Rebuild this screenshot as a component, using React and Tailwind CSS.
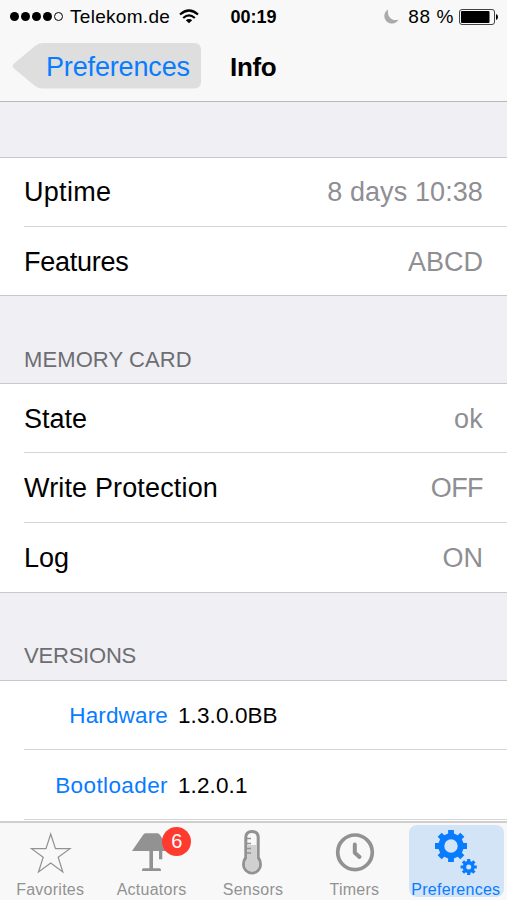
import React from 'react';

const sections = [
    {
        title: '',
        rows: [
            { label: 'Uptime', value: '8 days 10:38', height: 'h-[69px]', labelStyle: 'tracking-[0.3px]', valueStyle: 'tracking-[0.1px]' },
            { label: 'Features', value: 'ABCD', height: 'h-[68px] pt-[2px]', labelStyle: 'tracking-[-0.25px]', valueStyle: '' },
        ],
    },
    {
        title: 'MEMORY CARD',
        rows: [
            { label: 'State', value: 'ok', height: 'h-[69px] pt-[2px]', labelStyle: '', valueStyle: 'tracking-[0.3px]' },
            { label: 'Write Protection', value: 'OFF', height: 'h-[70px] pt-[2px]', labelStyle: 'tracking-[0.15px]', valueStyle: 'tracking-[-0.6px]' },
            { label: 'Log', value: 'ON', height: 'h-[69px] pt-[2px]', labelStyle: '', valueStyle: '' },
        ],
    },
];

const versions = [
    { label: 'Hardware', value: '1.3.0.0BB', height: 'h-[69px] pt-[2px]', labelStyle: 'tracking-[0.15px]' },
    { label: 'Bootloader', value: '1.2.0.1', height: 'h-[70px] pt-[2px]', labelStyle: 'tracking-[0.4px]' },
];

const gearPath = (cx, cy, outer, root, hole, tooth) => {
    let teeth = '';
    for (let i = 0; i < 8; i++) {
        const a = (i * Math.PI) / 4;
        const point = (x, y) =>
            `${(cx + x * Math.cos(a) - y * Math.sin(a)).toFixed(2)} ${(cy + x * Math.sin(a) + y * Math.cos(a)).toFixed(2)}`;
        const edge = Math.sqrt(root * root - tooth * tooth);
        teeth += `${i === 0 ? 'M' : 'L'}${point(edge, -tooth)}L${point(outer, -tooth)}L${point(outer, tooth)}L${point(edge, tooth)}`;
    }
    return `${teeth}ZM${cx + hole} ${cy}a${hole} ${hole} 0 1 0 ${-2 * hole} 0a${hole} ${hole} 0 1 0 ${2 * hole} 0Z`;
};

function WifiIcon() {
    return (
        <svg width="20" height="15" viewBox="0 0 20 15" fill="none" stroke="#000" strokeWidth="2.2">
            <path d="M1 5.5Q10-2.500 19 5.500" />
            <path d="M4.200 9Q10 3.800 15.800 9" />
            <path d="M6.800 11.200Q10 8.600 13.200 11.200L10 14.200Z" fill="#000" stroke="none" />
        </svg>
    );
}

function BackButton() {
    return (
        <button className="relative ml-3 mt-px block h-[46px] w-[190px]">
            <svg className="absolute inset-0" width="190" height="46" viewBox="0 0 190 46">
                <path
                    d="M31 0H182Q189 0 189 7V38.500Q189 45.500 182 45.500H31Q26.500 45.500 23 43L2 25.500Q-.5 23 2 20.500L23 3Q26.500 0 31 0Z"
                    fill="#dedede"
                />
            </svg>
            <span className="relative block pl-[34px] pt-px text-left text-[27px] leading-[47px] tracking-[-0.15px] text-[#087cff]">
                Preferences
            </span>
        </button>
    );
}

function StarIcon() {
    return (
        <svg className="shrink-0" width="44" height="54" viewBox="0 0 44 54" fill="none" stroke="#929292" strokeWidth="1.2">
            <path d="M21.700 11L26.500 25.700H41L29.200 34.200L33.800 49L21.700 40L9.500 49L14.200 34.200L2.500 25.700H17Z" />
        </svg>
    );
}

function LampIcon() {
    return (
        <svg className="shrink-0" width="44" height="54" viewBox="0 0 44 54" fill="#929292">
            <path d="M15.500 10.300H27.500Q29 10.300 30 12L40 28H2L13 12Q14 10.300 15.500 10.300Z" />
            <path d="M19.400 27H23V45.200H30Q31 45.200 31 48H12Q12 45.200 13 45.200H19.400Z" />
            <path d="M29 27H32.300V36.300H29Z" />
        </svg>
    );
}

function ThermometerIcon() {
    return (
        <svg className="shrink-0" width="44" height="54" viewBox="0 0 44 54">
            <path d="M13.300 34V14.500Q13.300 7 21 7Q28.700 7 28.700 14.500V34Q31 37 31 41.500A10 10 0 0 1 11 41.500Q11 37 13.300 34Z" fill="#929292" />
            <path d="M16.300 35.500V14.500Q16.300 10 21 10Q25.700 10 25.700 14.500V35.500Q28 38 28 41.500A7 7 0 0 1 14 41.500Q14 38 16.300 35.500Z" fill="#f8f8f8" />
            <path d="M16.300 22H25.700V35.500Q28 38 28 41.500A7 7 0 0 1 14 41.500Q14 38 16.300 35.500Z" fill="#d0d0d0" />
            <path d="M16 15.500H20M16 20.500H20M16 25.500H20M16 30H20" stroke="#929292" strokeWidth="1.3" />
        </svg>
    );
}

function ClockIcon() {
    return (
        <svg className="shrink-0" width="44" height="54" viewBox="0 0 44 54" fill="none" stroke="#929292">
            <circle cx="22" cy="29.300" r="17.300" strokeWidth="3.700" />
            <path d="M21.800 21.500V29.800L26.500 34" strokeWidth="4" strokeLinecap="round" strokeLinejoin="round" />
        </svg>
    );
}

function GearsIcon() {
    return (
        <svg className="-mt-[2px] shrink-0" width="44" height="54" viewBox="0 0 44 54" fill="#087cff" fillRule="evenodd">
            <path d={gearPath(17, 23, 16, 12.8, 6.7, 2.9)} />
            <path d={gearPath(34.7, 44, 8.1, 6.1, 2.5, 1.6)} />
        </svg>
    );
}

const tabs = [
    { label: 'Favorites', icon: StarIcon },
    { label: 'Actuators', icon: LampIcon, badge: 6 },
    { label: 'Sensors', icon: ThermometerIcon },
    { label: 'Timers', icon: ClockIcon },
    { label: 'Preferences', icon: GearsIcon, active: true },
];

function StatusBar() {
    return (
        <div className="grid h-[33px] grid-cols-[1fr_60px_1fr] items-center text-[19px] leading-none">
            <div className="flex items-center pl-[10px]">
                <div className="flex gap-[2px]">
                    {[0, 1, 2, 3].map(i => (
                        <span key={i} className="size-[9px] rounded-full bg-black" />
                    ))}
                    <span className="size-[9px] rounded-full border border-black" />
                </div>
                <span className="ml-[7px] tracking-[0.3px]">Telekom.de</span>
                <span className="ml-[9px]"><WifiIcon /></span>
            </div>
            <span className="text-center text-[18px] font-bold">00:19</span>
            <div className="flex items-center justify-end pr-[9px]">
                <svg width="16" height="16" viewBox="0 0 16 16">
                    <path d="M5.200 .5A7.500 7.500 0 1 0 15.500 10.500C9.500 13 3.500 7.500 5.200 .5Z" fill="#aaa" />
                </svg>
                <span className="ml-[9px] tracking-[0.6px]">88 %</span>
                <svg className="ml-[5px]" width="39" height="16" viewBox="0 0 39 16">
                    <rect x=".5" y=".5" width="35" height="15" rx="2.500" fill="none" stroke="#444" />
                    <rect x="2" y="2" width="28.500" height="12" rx="1" />
                    <path d="M37 5Q39 5.500 39 8T37 11Z" />
                </svg>
            </div>
        </div>
    );
}

function TabBar() {
    return (
        <nav className="grid h-[79px] shrink-0 grid-cols-5 grid-rows-[77px] border-t-2 border-[#cfcfcf] bg-[#f8f8f8]">
            {tabs.map(tab => {
                const Icon = tab.icon;
                return (
                    <button
                        key={tab.label}
                        className={`relative flex flex-col items-center justify-start ${tab.active ? 'mx-[3px] mt-[2px] h-[72px] rounded-lg bg-[#d3e4f7] text-[#087cff]' : 'text-[#929292]'}`}
                    >
                        <Icon />
                        {tab.badge && (
                            <span className="absolute left-[61px] top-[4px] size-[29px] rounded-full bg-[#ff3b30] text-center text-[20px] leading-[29px] text-white">
                                {tab.badge}
                            </span>
                        )}
                        <span className="pr-px pt-px text-[16px] leading-[24px] tracking-[0.25px]">{tab.label}</span>
                    </button>
                );
            })}
        </nav>
    );
}

function App() {
    return (
        <div className="flex h-[900px] w-[507px] flex-col overflow-hidden bg-[#efeff4] font-['Liberation_Sans',Arial,sans-serif] text-black">
            <header className="h-[102px] shrink-0 border-b border-[#b8b8bc] bg-[#f8f8f8]">
                <StatusBar />
                <div className="mt-[9px] flex">
                    <BackButton />
                    <h1 className="ml-[28px] pt-[2px] text-[26px] font-bold leading-[46px] tracking-[-0.3px]">Info</h1>
                </div>
            </header>

            <main className="min-h-0 flex-1 overflow-hidden">
                {sections.map((section, index) => (
                    <section key={index}>
                        <h2 className={`${index === 0 ? 'h-[55px]' : 'h-[87px] pt-[50px]'} pl-6 text-[22px] leading-[27px] tracking-[0.1px] text-[#6d6d72]`}>
                            {section.title}
                        </h2>
                        <div className="border-y border-[#c8c7cc] bg-white pl-6">
                            {section.rows.map(row => (
                                <div
                                    key={row.label}
                                    className={`flex items-center justify-between border-b border-[#d5d5d8] pr-6 text-[27px] last:border-b-0 ${row.height}`}
                                >
                                    <span className={row.labelStyle}>{row.label}</span>
                                    <span className={`text-[#8e8e93] ${row.valueStyle}`}>{row.value}</span>
                                </div>
                            ))}
                        </div>
                    </section>
                ))}
                <section>
                    <h2 className="h-[87px] pl-6 pt-[49px] text-[22px] leading-[27px] tracking-[-0.2px] text-[#6d6d72]">VERSIONS</h2>
                    <div className="border-t border-[#c8c7cc] bg-white pb-2 pl-6">
                        {versions.map(version => (
                            <div key={version.label} className={`flex items-center gap-[10px] border-b border-[#d5d5d8] text-[22.5px] ${version.height}`}>
                                <span className={`w-[144px] text-right text-[#087cff] ${version.labelStyle}`}>{version.label}</span>
                                <span className="tracking-[0.1px]">{version.value}</span>
                            </div>
                        ))}
                    </div>
                </section>
            </main>

            <TabBar />
        </div>
    );
}

export default App;
